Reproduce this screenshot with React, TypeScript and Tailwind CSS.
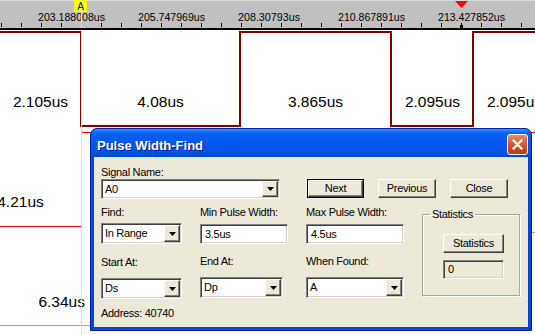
import React from "react";

const sunken =
  "border border-t-[#808080] border-l-[#808080] border-b-white border-r-white shadow-[inset_1px_1px_0_#404040,inset_-1px_-1px_0_#d4d0c8]";
const raised =
  "border border-t-white border-l-white border-b-[#404040] border-r-[#404040] shadow-[inset_-1px_-1px_0_#808080] bg-[#ece9d8]";

const rulerLabels = ["203.188008us", "205.747969us", "208.30793us", "210.867891us", "213.427852us"];

function Arrow() {
  return (
    <svg width="7" height="4" viewBox="0 0 7 4">
      <polygon points="0,0 7,0 3.5,4" fill="#000" />
    </svg>
  );
}

function Combo({ value, className }: { value: string; className: string }) {
  return (
    <div className={`flex items-stretch bg-white p-[1px] ${sunken} ${className}`}>
      <span className="flex-1 flex items-center pl-[2px] whitespace-nowrap">{value}</span>
      <span className={`w-[16px] flex items-center justify-center ${raised}`}>
        <Arrow />
      </span>
    </div>
  );
}

function Edit({ value, className, bg = "bg-white" }: { value: string; className: string; bg?: string }) {
  return <div className={`flex items-center pl-[4px] ${bg} ${sunken} ${className}`}>{value}</div>;
}

function Btn({ label, className }: { label: string; className: string }) {
  return <div className={`flex items-center justify-center ${raised} ${className}`}>{label}</div>;
}

function Ruler() {
  const ticks = Array.from({ length: 27 }, (_, i) => 1 + i * 20);
  return (
    <svg width="535" height="30" className="block">
      <rect x="0" y="0" width="535" height="30" fill="#c0c0c0" />
      <rect x="0" y="0" width="535" height="1" fill="#d8d8d8" />
      {ticks.map((x) => (
        <rect key={x} x={x} y="23" width="1" height="4" fill="#000" />
      ))}
      <rect x="460" y="25" width="3" height="4" fill="#000" />
      <rect x="0" y="28" width="535" height="2" fill="#000" />
      {rulerLabels.map((t, i) => (
        <text
          key={t}
          x={38 + i * 100}
          y="21"
          fontSize="11"
          fontFamily="'Liberation Sans', Arial, sans-serif"
          textLength={t.length === 12 ? 67 : 62}
          lengthAdjust="spacingAndGlyphs"
          fill="#000"
        >
          {t}
        </text>
      ))}
      <rect x="81" y="12" width="1" height="16" fill="#ffff00" />
      <rect x="74" y="0" width="13" height="12" fill="#ffff00" />
      <text x="80.5" y="10" fontSize="10" textAnchor="middle" fontFamily="'Liberation Sans', Arial, sans-serif" fill="#0000ff">
        A
      </text>
      <polygon points="455,1 468,1 461.5,8" fill="#ff0000" />
    </svg>
  );
}

function Waves() {
  const labels: [number, number, string][] = [
    [40.5, 76.5, "2.105us"],
    [160.5, 76.5, "4.08us"],
    [315.5, 76.5, "3.865us"],
    [432.5, 76.5, "2.095us"],
    [514.5, 76.5, "2.095us"],
    [20.5, 176.5, "4.21us"],
    [61.7, 276.5, "6.34us"],
  ];
  return (
    <svg width="535" height="305" className="block">
      <path d="M0 2 H81 V96 H240 V2 H391 V96 H473 V2 H535" stroke="#800000" strokeWidth="2" fill="none" />
      <path d="M0 196.5 H81.5 V102.5 H535" stroke="#ff0000" strokeWidth="1" fill="none" />
      <path d="M0 295.5 H300 V202.5 H535" stroke="#ff8040" strokeWidth="1" fill="none" />
      {labels.map(([x, y, t], i) => (
        <text key={i} x={x} y={y} fontSize="15.5" textAnchor="middle" fontFamily="'Liberation Sans', Arial, sans-serif" fill="#000">
          {t}
        </text>
      ))}
      <rect x="81" y="0" width="1" height="305" fill="#ffff00" />
    </svg>
  );
}

function PulseDialog() {
  return (
    <div className="absolute left-[90px] top-[128px] w-[442px] h-[203px] flex flex-col bg-[#0844d8] border border-[#0020a8] rounded-t-[7px] overflow-hidden font-['Liberation_Sans',Arial,sans-serif]">
      <div className="h-[28px] shrink-0 flex items-start justify-between pl-[6px] pr-[3px] pt-[5px] bg-[linear-gradient(to_bottom,#3d95ff_0%,#0a62f0_14%,#0058ee_45%,#0055e5_80%,#0047d6_100%)]">
        <span className="mt-[4px] leading-[15px] text-[13px] font-bold text-white [text-shadow:1px_1px_0_#0a1c8a]">
          Pulse Width-Find
        </span>
        <div className="w-[21px] h-[21px] rounded-[3px] border border-white bg-[linear-gradient(to_bottom,#eb8a6c,#d9542f_50%,#c23a17)] flex items-center justify-center">
          <svg width="11" height="11" viewBox="0 0 11 11">
            <path d="M1.5 1.5 L9.5 9.5 M9.5 1.5 L1.5 9.5" stroke="#fff" strokeWidth="2.2" strokeLinecap="square" />
          </svg>
        </div>
      </div>

      <div className="flex-1 mx-[3px] mb-[3px] bg-[#ece9d8] pl-[7px] pt-[9px] text-[11px] leading-[13px] tracking-[-0.3px] text-black">
        <div className="flex items-start">
          <div className="w-[179px]">
            <div className="h-[13px]">Signal Name:</div>
            <Combo value="A0" className="h-[20px]" />
          </div>
          <div className="ml-[27px] mt-[13px] flex gap-[14px]">
            <div className="border border-black">
              <Btn label="Next" className="w-[55px] h-[17px]" />
            </div>
            <Btn label="Previous" className="w-[58px] h-[19px]" />
            <Btn label="Close" className="w-[58px] h-[19px]" />
          </div>
        </div>

        <div className="flex items-start">
          <div className="w-[81px] flex flex-col">
            <div className="mt-[7px] h-[13px]">Find:</div>
            <Combo value="In Range" className="mt-[4px] h-[21px]" />
            <div className="mt-[12px] h-[13px]">Start At:</div>
            <Combo value="Ds" className="mt-[9px] h-[21px]" />
            <div className="mt-[8px] h-[13px] whitespace-nowrap">Address: 40740</div>
          </div>
          <div className="ml-[18px] w-[88px] flex flex-col">
            <div className="mt-[7px] h-[13px] whitespace-nowrap">Min Pulse Width:</div>
            <Edit value="3.5us" className="mt-[5px] h-[20px]" />
            <div className="mt-[11px] h-[13px]">End At:</div>
            <Combo value="Dp" className="mt-[9px] h-[21px] w-[83px]" />
          </div>
          <div className="ml-[18px] w-[98px] flex flex-col">
            <div className="mt-[7px] h-[13px] whitespace-nowrap">Max Pulse Width:</div>
            <Edit value="4.5us" className="mt-[5px] h-[20px]" />
            <div className="mt-[11px] h-[13px]">When Found:</div>
            <Combo value="A" className="mt-[9px] h-[21px]" />
          </div>
          <fieldset className="ml-[18px] mt-[9px] w-[98px] h-[88px] border border-[#aca899] shadow-[1px_1px_0_#fff,inset_1px_1px_0_#fff]">
            <legend className="ml-[7px] px-[2px] leading-[13px]">Statistics</legend>
            <Btn label="Statistics" className="ml-[20px] mt-[13px] w-[61px] h-[19px]" />
            <Edit value="0" bg="bg-[#ece9d8]" className="ml-[20px] mt-[7px] w-[61px] h-[19px]" />
          </fieldset>
        </div>
      </div>
    </div>
  );
}

export default function App() {
  return (
    <div className="relative w-[535px] h-[335px] overflow-hidden bg-white">
      <Ruler />
      <Waves />
      <PulseDialog />
    </div>
  );
}
